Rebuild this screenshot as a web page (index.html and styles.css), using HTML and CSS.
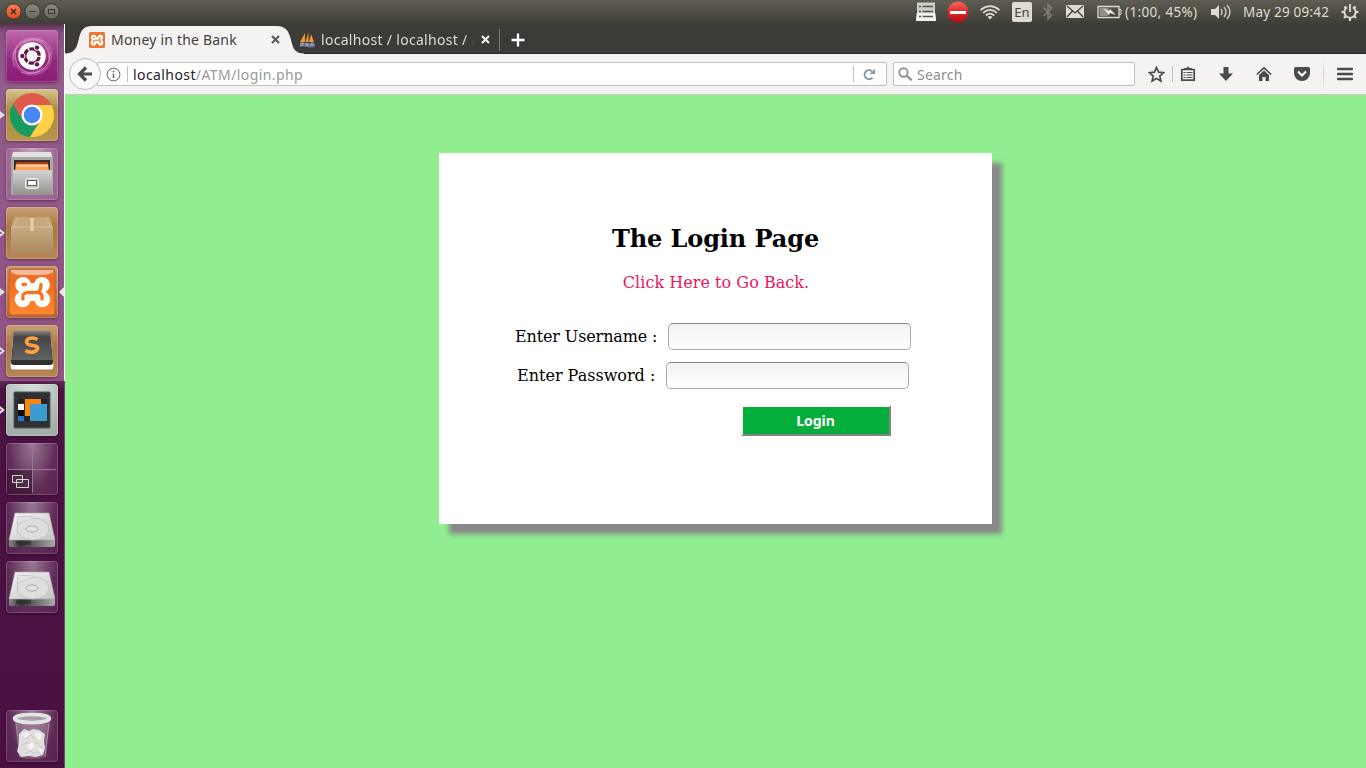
FILE: index.html
```html
<!DOCTYPE html>
<html lang="en">
<head>
<meta charset="utf-8">
<title>Money in the Bank</title>
<link rel="stylesheet" href="styles.css">
</head>
<body>
<header class="panel">
  <div class="window-buttons">
    <svg width="56" height="24" viewBox="0 0 56 24">
      <defs>
        <linearGradient id="wred" x2="0" y2="1"><stop stop-color="#f7825c"/><stop offset="1" stop-color="#dd4a1c"/></linearGradient>
        <linearGradient id="wgray" x2="0" y2="1"><stop stop-color="#8d8a82"/><stop offset="1" stop-color="#66645d"/></linearGradient>
      </defs>
      <g stroke="#34332e">
        <circle cx="7.5" cy="11.500" r="7.700" fill="url(#wred)"/>
        <circle cx="26.500" cy="11.500" r="7.700" fill="url(#wgray)"/>
        <circle cx="45.500" cy="11.500" r="7.700" fill="url(#wgray)"/>
      </g>
      <path d="M5 9l5 5M10 9l-5 5" stroke="#4a2a1e" stroke-width="1.500"/>
      <path d="M23 11.500h7M42.500 9.500h6v4h-6z" stroke="#3a3934" stroke-width="1.200" fill="none"/>
    </svg>
  </div>
  <div class="indicators">
    <svg class="i-list" width="22" height="22" viewBox="0 0 22 22"><path d="M2 1.500h18v10l1 8.500H1l1-8.500z" fill="#cfcdc9"/><path d="M1.800 12h18.400l.8 8H1z" fill="#f3f2ef"/><path d="M4 5.500h2M4 10.500h2M4 15.500h2M7.500 5.500H18M7.500 10.500H18M7.500 15.500H18" stroke="#55534e" stroke-width="1.400"/></svg>
    <svg class="i-stop" width="22" height="22" viewBox="0 0 22 22"><defs><linearGradient id="stop" x2="0" y2="1"><stop stop-color="#f56a60"/><stop offset=".5" stop-color="#d8292a"/><stop offset="1" stop-color="#b80d16"/></linearGradient></defs><circle cx="11" cy="11" r="10.500" fill="url(#stop)"/><path d="M3 10h16v3H3z" fill="#fff"/></svg>
    <svg class="i-wifi" width="22" height="22" viewBox="0 0 22 22"><g fill="none" stroke="#dfdbd2" stroke-width="1.700"><path d="M1.500 9Q11 1.300 20.500 9M4 11.800Q11 6 18 11.800M6.800 14.500Q11 10.900 15.200 14.500"/></g><path d="M8.500 15.900q2.500-2 5 0L11 18.500z" fill="#dfdbd2"/></svg>
    <span class="i-lang">En</span>
    <svg class="i-bt" width="12" height="20" viewBox="0 0 12 20"><path d="M1.500 5.500l8 8L6 17V2.500L9.500 6l-8 8" fill="none" stroke="#85827a" stroke-width="1.400"/></svg>
    <svg class="i-mail" width="18" height="14" viewBox="0 0 18 14"><rect width="18" height="13" rx="1" fill="#dfdbd2"/><path d="M1 1l8 7 8-7M1 12l5.500-6M17 12l-5.500-6" fill="none" stroke="#45433d" stroke-width="1.300"/></svg>
    <svg class="i-battery" width="25" height="14" viewBox="0 0 25 14"><path d="M1 1.500h21v11H1z" fill="none" stroke="#dfdbd2" stroke-width="1.300"/><path d="M22 4.500h2v5h-2" fill="none" stroke="#dfdbd2"/><path d="M2.500 3h9v8h-9z" fill="#918e86"/><path d="M6 3l6 3 1-2 6 6-6-2-1 2z" fill="#eeeae1"/></svg>
    <span class="i-charge">(1:00, 45%)</span>
    <svg class="i-sound" width="20" height="18" viewBox="0 0 20 18"><path d="M0 6h4l4-4v14l-4-4H0z" fill="#dfdbd2"/><path d="M10 6q2 3 0 6M13 4q4 5 0 10M16 2q6 7 0 14" fill="none" stroke="#c8c4bb" stroke-width="1.500"/></svg>
    <time class="i-clock">May 29 09:42</time>
    <svg class="i-gear" width="18" height="18" viewBox="0 0 18 18"><g fill="none" stroke="#dfdbd2"><path d="M6 4.200a5.700 5.700 0 1 0 6 0" stroke-width="1.900"/><path d="M9 1v8" stroke-width="1.800"/><path d="M3.500 3.500l2 2M14.500 3.500l-2 2M.5 9H3M15 9h2.500M3 15l2-2M15 15l-2-2M9 14.500V18" stroke-width="2.200"/></g></svg>
  </div>
</header>
<div class="desktop">
  <nav class="launcher">
    <div class="tile dash"><svg viewBox="0 0 52 52"><g fill="none" stroke="#e6b1d9" stroke-opacity=".55"><path d="M9 37C3 19 17 4 35 10M43 15C50 31 38 49 20 43M15 17C24 2 46 9 44 28M37 37C23 50 8 40 8 25" stroke-width="3" stroke-opacity=".25"/><path d="M7 30C7 12 24 5 37 11M44 22C45 40 28 47 15 42M17 13C32 4 45 17 43 31M34 41C18 48 6 34 10 19"/></g><circle cx="26" cy="26" r="13.800" fill="#fff"/><circle cx="26" cy="26" r="7.200" fill="none" stroke="#611847" stroke-width="3.200" stroke-dasharray="13.600 1.500" transform="rotate(7 26 26)"/><g fill="#611847" stroke="#fff"><circle cx="16.400" cy="26" r="2.700"/><circle cx="31" cy="17.600" r="2.700"/><circle cx="31" cy="34.400" r="2.700"/></g></svg></div>
    <div class="tile chrome"><i class="running"></i><svg viewBox="0 0 52 52"><path d="M26 26L6.950 15A22 22 0 0 0 24 48l10-17z" fill="#189b5e"/><path d="M26 16h19.600A22 22 0 0 1 24 48l11-17z" fill="#fdd146"/><path d="M16 30L6.950 15A22 22 0 0 1 45.600 16H26z" fill="#df5a4b"/><circle cx="26" cy="26" r="10.500" fill="#fff"/><circle cx="26" cy="26" r="8.300" fill="#4688f1"/></svg></div>
    <div class="tile clear"><svg viewBox="0 0 52 52"><defs><linearGradient id="cab" x2="0" y2="1"><stop stop-color="#d4d4d2"/><stop offset="1" stop-color="#929391"/></linearGradient></defs><path d="M7 4h38l2 5v38H5V9z" fill="#a9a9a7"/><path d="M7 4h38l1 5H6z" fill="#e2e2e0"/><path d="M8 12h36v12H8z" fill="#392d29"/><path d="M10 14h32v8H10z" fill="#a93920"/><path d="M10 16h32l1 7H9z" fill="#ffa65c"/><path d="M11 18h31" stroke="#fff1ce"/><path d="M7 22h39v25H7z" fill="url(#cab)"/><rect x="19.500" y="30.500" width="13" height="10" rx="2" fill="#cccac6" stroke="#eee"/><rect x="21.500" y="32.500" width="9" height="5" fill="#fff" stroke="#555"/></svg></div>
    <div class="tile brown"><i class="running hollow"></i><svg viewBox="0 0 52 52"><defs><linearGradient id="box" x2="0" y2="1"><stop stop-color="#d0b892"/><stop offset="1" stop-color="#aa8a5b"/></linearGradient></defs><path d="M9 10h34l4 10v25q0 2-2 2H7q-2 0-2-2V20z" fill="url(#box)"/><path d="M9 10h34l3 9H6z" fill="#c6a67b"/><path d="M5 20h42M12 11L8 19M40 11l4 8" stroke="#d5bd96"/><path d="M24.500 11h3v13h-3z" fill="#e2d2b6"/></svg></div>
    <div class="tile brown xampp"><i class="running"></i><i class="focused"></i><svg viewBox="0 0 52 52"><defs><linearGradient id="xm" x2="0" y2="1"><stop stop-color="#e47b42"/><stop offset=".25" stop-color="#f26a1d"/><stop offset="1" stop-color="#ff8730"/></linearGradient></defs><rect x="3" y="3" width="46" height="46" rx="3" fill="url(#xm)" stroke="#b8622a"/><path d="M5 4h42v2q-4 3-11 3H16Q8 9 5 6z" fill="#fff" opacity=".5"/><g id="xamppmark"><g fill="#fff"><circle cx="17" cy="18.700" r="7.800"/><circle cx="36" cy="18.700" r="7.800"/><circle cx="16.700" cy="33.300" r="8"/><circle cx="36.300" cy="33.300" r="8"/><path d="M15 20l8-3h7l8 3v12l-8 3h-7l-8-3z"/></g><path d="M17 18.500h2.500M17 33q-1.500-5.500 4-6.500H31q4-1 4-8M31 26.500q6 0 5 6.500" fill="none" stroke="#f5751f" stroke-width="3.300" stroke-linecap="round"/></g></svg></div>
    <div class="tile brown"><i class="running hollow"></i><svg viewBox="0 0 52 52"><defs><linearGradient id="sub" x2="0" y2="1"><stop stop-color="#858585"/><stop offset=".2" stop-color="#454545"/><stop offset="1" stop-color="#626262"/></linearGradient></defs><path d="M7 8h38l3 33q0 4-3 4H7q-3 0-3-4z" fill="#fff" stroke="#a67b54"/><path d="M8 6h36l3 31q0 3-3 3H8q-3 0-3-3z" fill="#303030"/><path d="M8 6h36l2 29H6z" fill="url(#sub)"/><path d="M31.500 14.500c-5-3-11-1-11 2.500 0 5 12 2 11 6.500-1 4-8 5-12 2" fill="none" stroke="#ffa23c" stroke-width="3.600"/></svg></div>
    <div class="tile gray"><i class="running hollow"></i><svg viewBox="0 0 52 52"><path d="M8 8h36v36H8z" fill="#303030" stroke="#505854"/><path d="M12 15h6v4h-6zM35 15h6v4h-6zM18 32h7v5h-7z" fill="#232323"/><path d="M19 15h16v17H19z" fill="#fc8510"/><path d="M12 20h6v6h-6z" fill="#fff"/><path d="M12 26h6v6h-6z" fill="#080808"/><path d="M12 32h6v5h-6z" fill="#2775cf"/><path d="M24 20h17v17H24z" fill="#3c9bd0"/></svg></div>
    <div class="tile clear workspaces"><svg viewBox="0 0 52 52"><path d="M1 26h25v25H1z" fill="#260822" opacity=".45"/><path d="M26.500 2v48M2 26.500h48" stroke="#9b7595"/><g stroke="#d8d0d5" fill="#4b3043"><path d="M6.500 32.500h10v7h-10zM10.500 36.500h12v8h-12z"/></g></svg></div>
    <div class="tile clear"><svg viewBox="0 0 52 52"><defs><linearGradient id="disk" x2="1" y2="1"><stop stop-color="#f3f3f3"/><stop offset="1" stop-color="#c5c5c5"/></linearGradient><linearGradient id="edge"><stop stop-color="#888"/><stop offset=".25" stop-color="#383838"/><stop offset="1" stop-color="#aaa"/></linearGradient><g id="drive"><path d="M3 38h46v5q0 2-2 2H5q-2 0-2-2z" fill="url(#edge)"/><path d="M9 11h34l6 27H3z" fill="url(#disk)" stroke="#aaa" stroke-width=".6"/><ellipse cx="27" cy="27" rx="16" ry="11" fill="#dedede" stroke="#c2c2c2"/><path d="M12 14.500h12q6 0 0 3-8 2-13 5z" fill="#e2e2e2" stroke="#cbcbcb"/><ellipse cx="26" cy="27" rx="6" ry="3" fill="#e3e3e3" stroke="#aaa"/><path d="M10 39h15v4H10z" fill="#222" opacity=".5"/></g></defs><use href="#drive"/></svg></div>
    <div class="tile clear"><svg viewBox="0 0 52 52"><use href="#drive"/></svg></div>
    <div class="tile clear trash"><svg viewBox="0 0 52 52"><path d="M9 9h35l-4 38q-14 4-27 0z" fill="#ede2eb" opacity=".22"/><path d="M10 13l4 33M43 13l-4 33" stroke="#c9b8c5" stroke-opacity=".5"/><path d="M13 24l5-5 5 2 4-2 6 1 6 4-1 7 1 7-2 7-7 2-7-1-8 1-4-6 2-7z" fill="#dededc"/><path d="M17 25l4 4 3-5 6 6 4-5M16 36l5-4 5 5 5-4 5 5M19 44l5-3 5 3 5-2" fill="none" stroke="#c9c9c7"/><path d="M16 24l5-3 3 4-5 3zM29 22l6 1 1 6-5 1zM21 35l5-3 4 5-6 3zM31 38l6 1-1 5z" fill="#f2f2f0"/><ellipse cx="26" cy="8.500" rx="17.500" ry="4" fill="#a99da6" stroke="#e4e4e1" stroke-width="3.500"/></svg></div>
  </nav>
  <section class="browser">
    <div class="tabbar">
      <div class="tab active">
        <svg class="tab-shape" width="240" height="30" viewBox="0 0 240 30"><path d="M0 30V29.500C14 29.500 12 17 16 8Q19 2 26 2H212Q221 2 224 10C228 18 226 29.500 239 29.500V30z" fill="#f4f3f2"/></svg>
        <div class="tab-body">
          <svg width="16" height="16" viewBox="0 0 16 16"><rect width="16" height="16" rx="1.500" fill="#ee7630"/><use href="#xamppmark" transform="translate(-1.300 -1) scale(.35)"/></svg>
          <span class="tab-title first">Money in the Bank</span>
          <svg class="close" width="9" height="9" viewBox="0 0 9 9"><path d="M1 1l7 7M8 1L1 8" stroke="#5c5b58" stroke-width="2.200"/></svg>
        </div>
      </div>
      <div class="tab second">
        <svg width="17" height="16" viewBox="0 0 17 16"><path d="M6 1v9H1zM9.500 0v10H6.500zM12 2l3 8h-5z" fill="#f49a2c"/><path d="M1 11q4-1 7 0t8 0v4q-4 1-8 0t-7 0z" fill="#686a8d"/><path d="M2 14v-3h2v2H2M7 11v3m0-1h2v-2m0 3v-3M12 14v-3h2v2h-2" fill="none" stroke="#bec0d4" stroke-width=".7"/></svg>
        <span class="tab-title other">localhost / localhost / A</span>
        <svg class="close" width="9" height="9" viewBox="0 0 9 9"><path d="M1 1l7 7M8 1L1 8" stroke="#eee" stroke-width="2.200"/></svg>
      </div>
      <svg class="new-tab" width="14" height="14" viewBox="0 0 14 14"><path d="M7 .5v13M.5 7h13" stroke="#fff" stroke-width="2.300"/></svg>
    </div>
    <div class="toolbar">
      <div class="back"><svg width="16" height="16" viewBox="0 0 16 16"><path d="M9 1.500L2.500 8 9 14.500M3 8h12" fill="none" stroke="#4b4b4b" stroke-width="3.200"/></svg></div>
      <div class="urlbar">
        <svg width="15" height="15" viewBox="0 0 15 15"><circle cx="7.500" cy="7.500" r="6.400" fill="none" stroke="#666"/><path d="M7.500 6.500v4.500M7.500 3.500v1.700" stroke="#666" stroke-width="1.500"/></svg>
        <span class="divider"></span>
        <span class="url"><b>localhost</b>/ATM/login.php</span>
        <span class="divider reload-line"></span>
        <svg class="reload" width="13" height="13" viewBox="0 0 13 13"><path d="M9.500 9.600A4.500 4.500 0 1 1 9 3.200" fill="none" stroke="#8497a8" stroke-width="2"/><path d="M12 .8V6H6.500z" fill="#8497a8"/></svg>
      </div>
      <div class="search"><svg width="15" height="15" viewBox="0 0 15 15"><circle cx="5.500" cy="5.500" r="4.200" fill="none" stroke="#929292" stroke-width="1.900"/><path d="M8.700 8.700l5 4.700" stroke="#929292" stroke-width="2.300"/></svg><span>Search</span></div>
      <div class="tools">
        <svg class="t-star" width="17" height="17" viewBox="0 0 17 17"><path d="M8.500 1.500l2.100 4.700 5 .5-3.800 3.400 1.100 5-4.400-2.600-4.400 2.600 1.100-5-3.800-3.400 5-.5z" fill="none" stroke="#4b4b4b" stroke-width="1.700"/></svg>
        <span class="divider star-line"></span>
        <svg class="t-clip" width="16" height="16" viewBox="0 0 16 16"><path d="M1.800 3.500h12.400v10.700H1.800z" fill="none" stroke="#4b4b4b" stroke-width="1.700"/><path d="M4 4V2h2.500L8 .3 9.500 2H12v2z" fill="#4b4b4b"/><path d="M3.500 6.500h2M6.500 6.500h6M3.500 9h2M6.500 9h6M3.500 11.500h2M6.500 11.500h6" stroke="#4b4b4b" stroke-width="1.200"/></svg>
        <svg class="t-down" width="16" height="16" viewBox="0 0 16 16"><path d="M5.500 1h5v6.500H15L8 15 1 7.500h4.500z" fill="#4b4b4b"/></svg>
        <svg class="t-home" width="16" height="16" viewBox="0 0 16 16"><path d="M.8 8.500L8 1.800l7.200 6.700" fill="none" stroke="#4b4b4b" stroke-width="1.700"/><path d="M8 4.500l5 4.500v6H9.500v-4h-3v4H3V9z" fill="#4b4b4b"/></svg>
        <svg class="t-pocket" width="16" height="16" viewBox="0 0 16 16"><path d="M1.500 1h13q1.500 0 1.500 1.500V7A8 8 0 0 1 0 7V2.500Q0 1 1.500 1z" fill="#4b4b4b"/><path d="M4 5.500l4 4 4-4" fill="none" stroke="#fff" stroke-width="2"/></svg>
        <span class="menu-line"></span>
        <svg class="t-menu" width="16" height="14" viewBox="0 0 16 14"><path d="M1 2h14M1 7h14M1 12h14" stroke="#4b4b4b" stroke-width="2.400" stroke-linecap="round"/></svg>
      </div>
    </div>
    <main class="page">
      <form class="card">
        <h2>The Login Page</h2>
        <a class="go-back" href="#">Click Here to Go Back.</a>
        <label class="row"><span class="label user">Enter Username :</span><input type="text"></label>
        <label class="row"><span class="label pass">Enter Password :</span><input type="password"></label>
        <button type="button">Login</button>
      </form>
    </main>
  </section>
</div>
</body>
</html>
```
FILE: styles.css
```css
* { box-sizing: border-box; }
body { margin: 0; width: 1366px; height: 768px; overflow: hidden; font-family: "Noto Sans", "Open Sans", sans-serif; display: flex; flex-direction: column; }
svg { display: block; flex: none; }

.panel { height: 24px; flex: none; display: flex; justify-content: space-between; background: linear-gradient(#5f5d52, #3e3d38); color: #dfdbd2; }
.window-buttons { padding-left: 6px; }
.indicators { display: flex; align-items: center; height: 24px; font-size: 14px; white-space: nowrap; padding-right: 7px; }
.i-list { margin-right: 10px; }
.i-stop { margin-right: 10px; }
.i-wifi { margin-right: 11px; }
.i-lang { width: 20px; height: 20px; border-radius: 2px; background: #dfdbd2; color: #45433e; line-height: 20px; font-size: 13px; text-align: center; margin-right: 10px; }
.i-bt { margin-right: 12px; }
.i-mail { margin-right: 13px; }
.i-battery { margin-right: 3px; }
.i-charge { width: 75px; font-size: 13.5px; letter-spacing: .35px; margin-right: 11px; }
.i-sound { margin-right: 12px; }
.i-clock { width: 87px; font-size: 13.5px; letter-spacing: .2px; margin-right: 11px; }

.desktop { display: flex; flex: 1; min-height: 0; }
.launcher { position: relative; width: 65px; flex: none; padding: 6px 7px 6px 6px; display: flex; flex-direction: column; gap: 7px; border-right: 1px solid; border-image: linear-gradient(#fff 357px, #625260 357px) 1; background: linear-gradient(#59324f 0, #8b5283 9px, #935a8a 60px, #925287 357px, #5d2855 357px, #4d1244 366px, #4a1041 100%); }
.tile { position: relative; width: 52px; height: 52px; flex: none; border-radius: 4px; box-shadow: 0 1px 3px #0006, inset 0 0 0 1px #ffffff2c; }
.tile svg { width: 52px; height: 52px; }
.dash { background: linear-gradient(#bf68ad, #93277d 60%, #8e1d79); }
.chrome { background: linear-gradient(#d8c490, #aa8b3e 40%, #b7974d); }
.brown { background: linear-gradient(#c9a077, #a9773f 40%, #b88753); }
.xampp { background: linear-gradient(#c89770, #ac6735); }
.gray { background: radial-gradient(circle at 50% 0, #d4dedb, #a3aeaa 80%); }
.clear { background: radial-gradient(ellipse at 50% 0, #ffffff70, #ffffff1c 65%, #ffffff12); }
.trash { margin-top: auto; }
.running { position: absolute; left: -6px; top: 22px; border: 4px solid transparent; border-left: 5px solid #e2dce0; border-right: 0; }
.running.hollow::after { content: ""; position: absolute; left: -6px; top: -2px; border: 2px solid transparent; border-left: 3px solid #71406a; border-right: 0; }
.focused { position: absolute; right: -6px; top: 21px; border: 5px solid transparent; border-right: 5px solid #eee8ec; border-left: 0; }

.browser { width: 1301px; display: flex; flex-direction: column; }
.tabbar { height: 30px; flex: none; display: flex; background: #3c3b37; border-bottom: 1px solid #292825; font-size: 15px; }
.tab { display: flex; align-items: center; height: 30px; white-space: nowrap; }
.active { position: relative; width: 232px; height: 30px; }
.tab-shape { position: absolute; left: 0; top: 0; }
.tab-body { position: relative; display: flex; align-items: center; height: 30px; padding: 1px 0 0 24px; color: #424240; }
.tab-title { margin-left: 6px; font-size: 14px; letter-spacing: .2px; }
.tab-title.first { width: 160px; }
.second { position: relative; color: #dfdbd2; padding-top: 1px; }
.second > svg:first-child { margin-left: 2px; }
.tab-title.other { width: 153px; margin-left: 5px; letter-spacing: .3px; -webkit-mask-image: linear-gradient(90deg, #000 144px, #0000); mask-image: linear-gradient(90deg, #000 144px, #0000); }
.second .close { margin: 0 10px 0 7px; }
.second::after { content: ""; position: absolute; right: 0; top: 5px; height: 22px; width: 1px; background: #77756f; }
.new-tab { margin: 9px 0 0 11px; }
.toolbar { height: 41px; flex: none; display: flex; align-items: center; background: #f4f3f2; border-bottom: 1px solid #cbc8c5; font-size: 14px; padding: 0 13px 0 4px; }
.back { position: relative; z-index: 1; width: 32px; height: 32px; border: 1px solid #bdbbb8; border-radius: 50%; background: #f9f9f9; display: grid; place-items: center; flex: none; }
.urlbar { height: 24px; width: 790px; margin-left: -4px; display: flex; align-items: center; background: #fff; border: 1px solid #c4c2be; border-radius: 0 2px 2px 0; padding-left: 8px; }
.divider { width: 1px; height: 16px; background: #c4c2be; margin: 0 5px 0 6px; }
.url { color: #999; letter-spacing: .41px; }
.url b { font-weight: 400; color: #222; }
.reload-line { margin: 0 9px 0 auto; }
.reload { margin-right: 10px; }
.search { height: 24px; width: 242px; margin-left: 6px; background: #fff; border: 1px solid #c4c2be; border-radius: 2px; padding-left: 4px; display: flex; align-items: center; gap: 4px; color: #8d8d8d; letter-spacing: .2px; }
.tools { display: flex; align-items: center; height: 40px; margin-left: auto; }
.star-line { margin: 0 7px; }
.t-down, .t-home { margin-right: 22px; }
.t-clip { margin-right: 22px; }
.t-pocket { margin-right: 13px; }
.menu-line { width: 1px; height: 34px; background: linear-gradient(#ddd0, #d2d0ce, #ddd0); margin-right: 13px; }

.page { flex: 1; background: #90ee90; padding-top: 58px; font-family: "DejaVu Serif", serif; font-size: 16px; color: #000; }
.card { width: 553px; height: 371px; margin: 0 0 0 374px; background: #fff; box-shadow: 10px 10px 5px #888; padding-top: 72px; display: flex; flex-direction: column; align-items: center; }
h2 { margin: 0; font-size: 24px; line-height: 28px; letter-spacing: -.1px; }
.go-back { color: #ed145b; text-decoration: none; line-height: 20px; margin: 20px 0 30px 1px; letter-spacing: .04px; }
.row { height: 27px; margin-bottom: 12px; display: flex; align-items: center; width: 401px; }
.label { white-space: nowrap; }
.user { width: 153px; letter-spacing: -.13px; }
.pass { width: 149px; margin-left: 2px; }
input { width: 243px; height: 27px; margin: 0; border: 1px solid #aaa; border-top-color: #888; border-radius: 5px; background: linear-gradient(#f2f2f2, #fff); flex: none; }
button { width: 150px; height: 31px; padding: 0 1px 0 0; margin: 4px 0 0 201px; border: 2px solid; border-color: #fff #858585 #858585 #fff; background: #04ae3b; color: #fff; font: bold 14px "Noto Sans", sans-serif; }
```
